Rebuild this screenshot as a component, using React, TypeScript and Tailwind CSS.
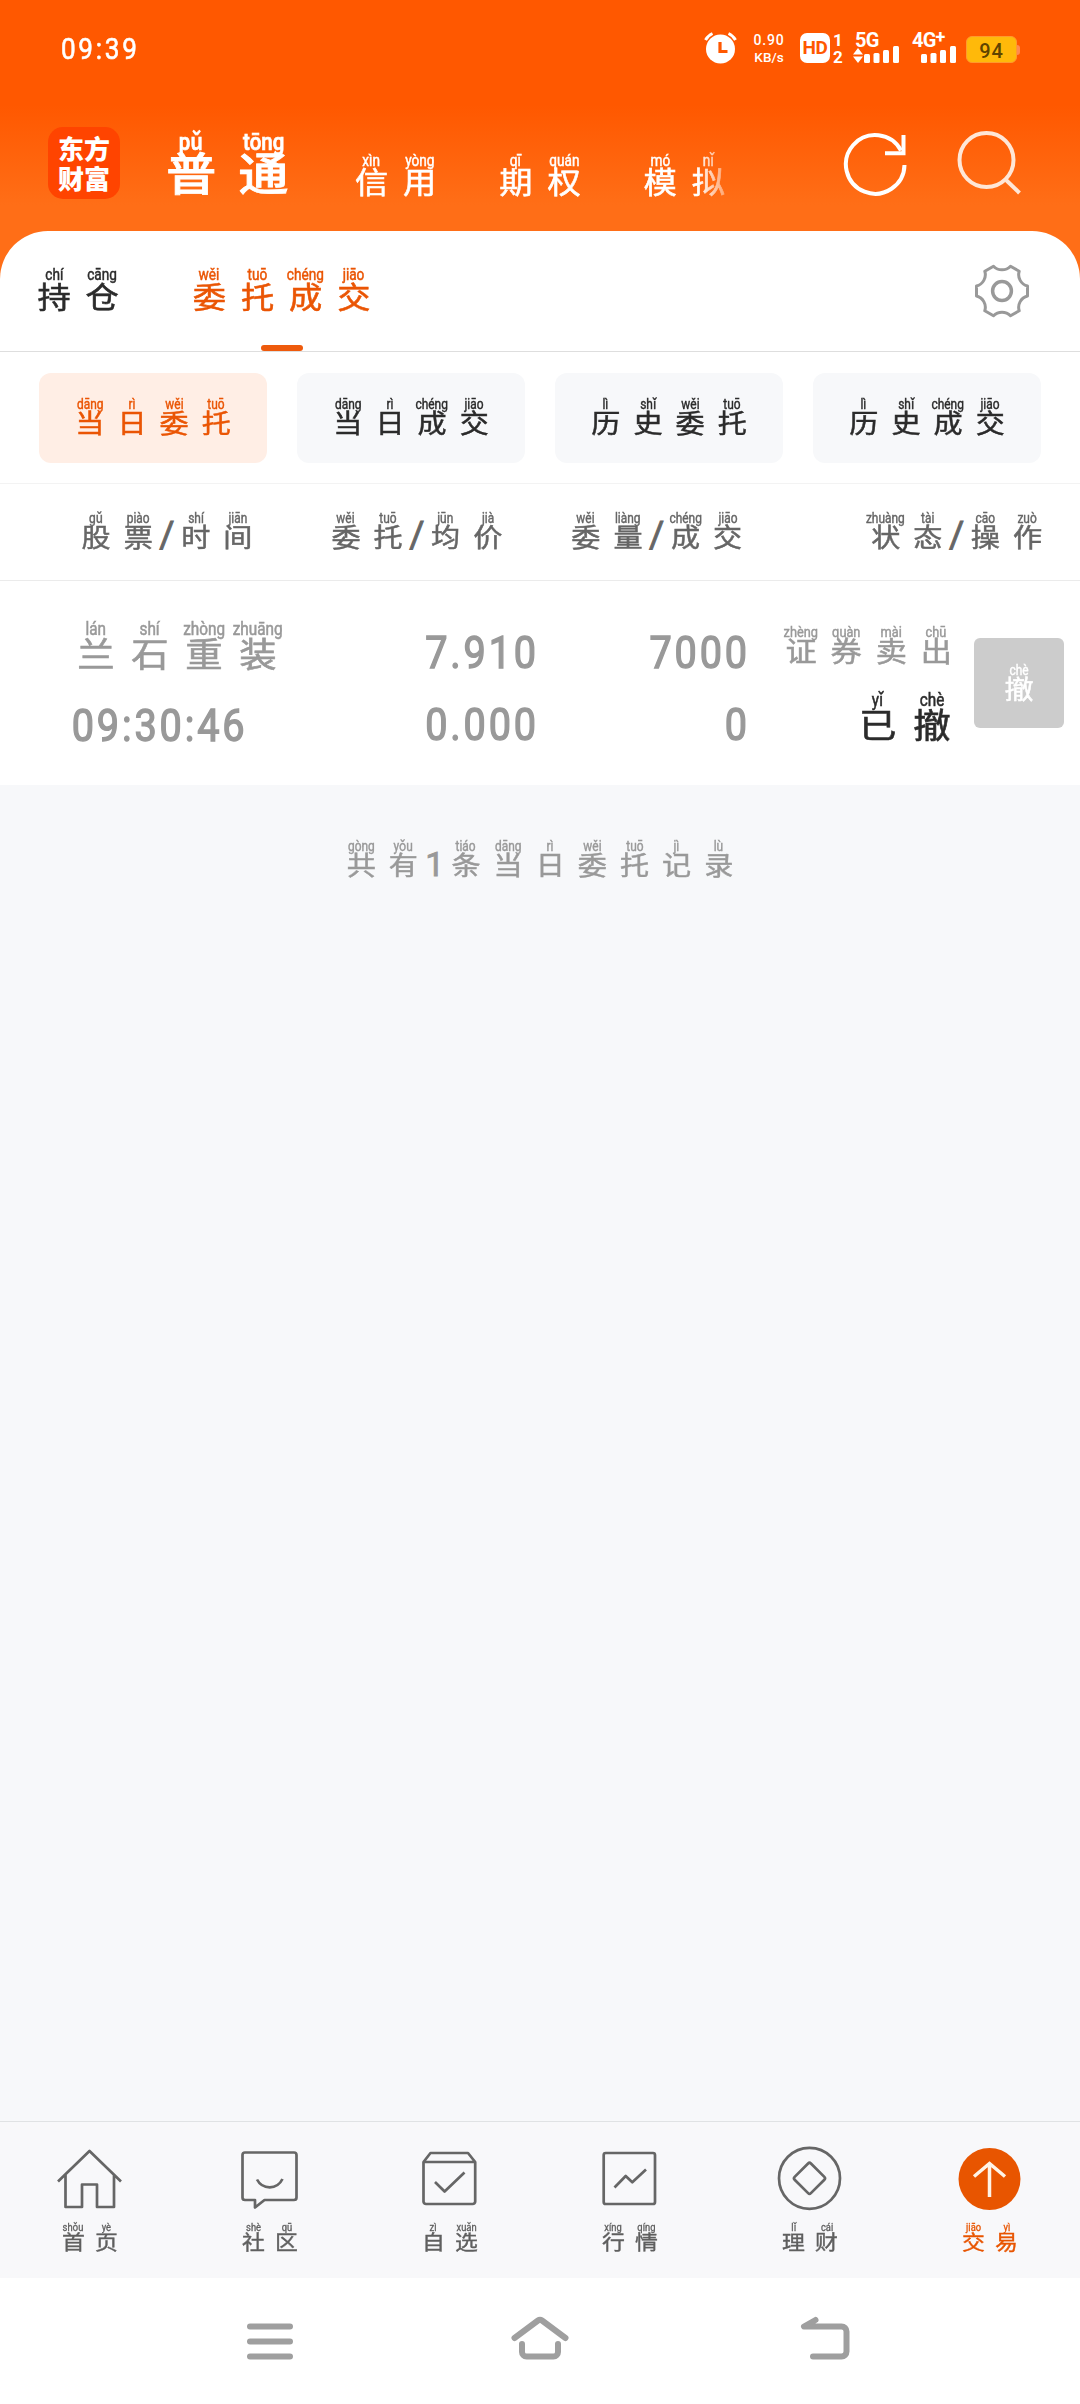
import React from "react";
import clsx from "clsx";

type Syllable = [string, string?];

// Each entry is [character, pinyin]; entries without pinyin are plain glyphs
const CHICANG: Syllable[] = [["持", "chí"], ["仓", "cāng"]];
const WEITUO: Syllable[] = [["委", "wěi"], ["托", "tuō"]];
const CHENGJIAO: Syllable[] = [["成", "chéng"], ["交", "jiāo"]];
const DANGRI: Syllable[] = [["当", "dāng"], ["日", "rì"]];
const LISHI: Syllable[] = [["历", "lì"], ["史", "shǐ"]];
const SLASH: Syllable[] = [["/"]];

interface PinyinProps {
  text: Syllable[];
  className?: string;
}

function Pinyin({ text, className }: PinyinProps) {
  return (
    <div className={clsx("flex shrink-0", className)}>
      {text.map(([char, pinyin], i) =>
        pinyin ? (
          <span key={i} className="flex w-[1.505em] flex-col items-center whitespace-nowrap pt-[.03em]">
            <span className="scale-x-[.87] text-[.49em] leading-none [-webkit-text-stroke:.03em]">{pinyin}</span>
            <span className="mt-[.06em] scale-y-[.9] text-[1.04em] leading-[.8em] [-webkit-text-stroke:.018em]">
              {char}
            </span>
          </span>
        ) : (
          <span
            key={i}
            className={clsx(
              "flex items-end justify-center [-webkit-text-stroke:.03em]",
              char === "/" ? "w-[.55em]" : "w-[.73em]"
            )}
          >
            <span className={clsx(char === "/" ? "text-[1.32em] leading-[.86em]" : "text-[1.21em] leading-[.8em]")}>
              {char}
            </span>
          </span>
        )
      )}
    </div>
  );
}

function SignalBars() {
  return (
    <svg width="36" height="17" viewBox="0 0 36 17" fill="#fff">
      <rect x="0" y="8" width="6" height="9" rx="1.5" />
      <rect x="9.5" y="7" width="6" height="10" rx="1.5" />
      <rect x="19" y="4" width="6" height="13" rx="1.5" />
      <rect x="29" y="0" width="6" height="17" rx="1.5" />
    </svg>
  );
}

function StatusBar() {
  return (
    <div className="flex h-[96px] items-center pl-[61px] pr-[60px] text-white">
      <span className="mt-[3px] origin-left scale-x-[.9] text-[29px] leading-none tracking-[3px] [-webkit-text-stroke:.6px]">
        09:39
      </span>
      <svg className="ml-auto" width="33" height="32" viewBox="0 0 33 32">
        <circle cx="16.5" cy="17" r="14.5" fill="#fff" />
        <path d="M1.5 8Q4 3.500 8.500 1.500M31.500 8Q29 3.500 24.500 1.500" stroke="#fff" strokeWidth="3" fill="none" />
        <path d="M16 10v9.500h7.500" stroke="#ff5800" strokeWidth="3.2" fill="none" />
      </svg>
      <div className="ml-4 flex w-[32px] flex-col gap-[3px] text-center text-[14px] font-medium leading-[14px]">
        <span className="tracking-[.8px]">0.90</span>
        <span className="text-[13.5px]">KB/s</span>
      </div>
      <div className="ml-[15px] flex h-[30px] w-[30px] items-center justify-center rounded-[7px] bg-white text-[19px] font-bold tracking-[-.5px] text-[#ff5800]">
        HD
      </div>
      <div className="ml-[2px] flex w-[12px] flex-col gap-[1px] text-center text-[17px] font-bold leading-[16px]">
        <span>1</span>
        <span>2</span>
      </div>
      <div className="ml-[9px] flex w-[47px] flex-col">
        <span className="h-[13px] pl-[2px] text-[20px] font-bold leading-[14px] tracking-[-.8px]">5G</span>
        <div className="flex items-end">
          <svg width="10" height="15" viewBox="0 0 10 15" fill="#fff" className="mr-[1px]">
            <path d="M5 0l5 6.500H0zM5 15l5-6.500H0z" />
          </svg>
          <SignalBars />
        </div>
      </div>
      <div className="ml-[12px] flex w-[45px] flex-col items-end">
        <div className="flex h-[13px] w-full text-[20px] font-bold leading-[14px] tracking-[-.8px]">
          <span>4G</span>
          <span className="text-[18px] leading-[8px]">+</span>
        </div>
        <SignalBars />
      </div>
      <div className="ml-[9px] mt-[3px] flex items-center">
        <div className="flex h-[27px] w-[51px] items-center justify-center rounded-[6px] border border-[#ff9a2c] bg-[#ffb90a] pt-[2px] text-[20px] font-medium tracking-[1px] text-[#5f4300]">
          94
        </div>
        <div className="h-[10px] w-[3px] rounded-r-sm bg-[#ff8a50]" />
      </div>
    </div>
  );
}

function Header() {
  return (
    <div className="flex h-[135px] items-end text-white">
      <div className="mb-8 ml-12 flex h-[72px] w-[72px] flex-col items-center justify-center rounded-[15px] bg-[#ff4400] font-[Noto_Sans_CJK_SC] text-[26px] font-black leading-[30px]">
        <span>东方</span>
        <span>财富</span>
      </div>
      <div className="ml-[35px] flex items-end gap-12 pb-[34px] text-[32px] [mask-image:linear-gradient(to_right,#000_94%,transparent_102%)]">
        <Pinyin className="text-[48px] font-medium" text={[["普", "pǔ"], ["通", "tōng"]]} />
        <Pinyin text={[["信", "xìn"], ["用", "yòng"]]} />
        <Pinyin text={[["期", "qī"], ["权", "quán"]]} />
        <Pinyin text={[["模", "mó"], ["拟", "nǐ"]]} />
      </div>
      <svg className="mb-[31px] ml-auto" width="72" height="72" viewBox="0 0 72 72" fill="none" stroke="#fff" strokeWidth="4">
        <path d="M62.500 37A29.300 29.300 0 1 1 59 22.500" />
        <path d="M43 25.300H61.500V7" />
      </svg>
      <svg
        className="mb-[31px] ml-10 mr-[54px]"
        width="72"
        height="72"
        viewBox="0 0 72 72"
        fill="none"
        stroke="#ffe6d6"
        strokeWidth="4"
      >
        <circle cx="32.5" cy="32" r="27" />
        <path d="M51.500 51.500L65.500 65" />
      </svg>
    </div>
  );
}

function SectionTabs() {
  return (
    <div className="flex h-[121px] items-start border-b border-[#dedede] pl-[30px] text-[32px]">
      <Pinyin className="mt-[35px] text-[#2b2b2b]" text={CHICANG} />
      <div className="ml-[59px] flex flex-col items-center pt-[35px] text-[#ea5504]">
        <Pinyin text={[...WEITUO, ...CHENGJIAO]} />
        <span className="mt-[34px] h-[6px] w-[42px] rounded-full bg-[#ee5a0c]" />
      </div>
      <svg
        className="ml-auto mr-[48px] mt-[30px]"
        width="60"
        height="60"
        viewBox="-30 -30 60 60"
        fill="none"
        stroke="#999"
        strokeWidth="3"
        strokeLinejoin="round"
      >
        <path d="M25.500-5V5A11.700 11.700 0 0 0 17.200 19.800L8.500 24.800A11.700 11.700 0 0 0-8.500 24.800L-17.200 19.800A11.700 11.700 0 0 0-25.500 5V-5A11.700 11.700 0 0 0-17.200-19.800L-8.500-24.800A11.700 11.700 0 0 0 8.500-24.800L17.200-19.800A11.700 11.700 0 0 0 25.500-5Z" />
        <circle r="9.400" strokeWidth="3.500" />
      </svg>
    </div>
  );
}

const filters: { text: Syllable[]; active?: boolean }[] = [
  { text: [...DANGRI, ...WEITUO], active: true },
  { text: [...DANGRI, ...CHENGJIAO] },
  { text: [...LISHI, ...WEITUO] },
  { text: [...LISHI, ...CHENGJIAO] },
];

function Filters() {
  return (
    <div className="flex h-[132px] gap-[30px] border-b border-[#f3f3f3] px-[39px] pt-[21px]">
      {filters.map((filter, i) => (
        <button
          key={i}
          className={clsx(
            "flex h-[90px] flex-1 items-start justify-center rounded-xl pt-[24px] text-[28px]",
            filter.active ? "bg-[#ffeee5] text-[#ea5504]" : "bg-[#f7f8fa] text-[#2b2b2b]"
          )}
        >
          <Pinyin text={filter.text} />
        </button>
      ))}
    </div>
  );
}

function TableHead() {
  return (
    <div className="flex h-[97px] items-start border-b border-[#ebebeb] pl-[75px] pt-[27px] text-[28px] text-[#666]">
      <Pinyin text={[["股", "gǔ"], ["票", "piào"], ...SLASH, ["时", "shí"], ["间", "jiān"]]} />
      <Pinyin className="ml-[66px]" text={[...WEITUO, ...SLASH, ["均", "jūn"], ["价", "jià"]]} />
      <Pinyin className="ml-[56px]" text={[["委", "wěi"], ["量", "liàng"], ...SLASH, ...CHENGJIAO]} />
      <Pinyin
        className="ml-[116px]"
        text={[["状", "zhuàng"], ["态", "tài"], ...SLASH, ["操", "cāo"], ["作", "zuò"]]}
      />
    </div>
  );
}

function OrderRow() {
  return (
    <div className="flex h-[204px] bg-white pl-[69px] text-[#999]">
      <div className="w-[216px] pt-[39px]">
        <Pinyin className="text-[36px]" text={[["兰", "lán"], ["石", "shí"], ["重", "zhòng"], ["装", "zhuāng"]]} />
        <div className="mt-[33px] w-fit origin-left scale-x-[.9] pl-[3px] text-[44px] leading-[44px] tracking-[3.2px] [-webkit-text-stroke:1.4px]">
          09:30:46
        </div>
      </div>
      <div className="flex w-[254px] origin-right scale-x-[.9] flex-col items-end gap-7 pt-[50px] text-[44px] leading-[44px] tracking-[3.2px] [-webkit-text-stroke:1.4px]">
        <span>7.910</span>
        <span>0.000</span>
      </div>
      <div className="flex w-[211px] origin-right scale-x-[.9] flex-col items-end gap-7 pt-[50px] text-[44px] leading-[44px] tracking-[3.2px] [-webkit-text-stroke:1.4px]">
        <span>7000</span>
        <span>0</span>
      </div>
      <div className="flex w-[209px] flex-col items-end pt-[43px]">
        <Pinyin className="text-[30px]" text={[["证", "zhèng"], ["券", "quàn"], ["卖", "mài"], ["出", "chū"]]} />
        <Pinyin className="mt-[25px] text-[36px] text-[#2b2b2b]" text={[["已", "yǐ"], ["撤", "chè"]]} />
      </div>
      <button className="ml-[15px] mt-[57px] flex h-[90px] w-[90px] items-start justify-center rounded-md bg-[#ccc] pt-[25px] text-[28px] text-white">
        <Pinyin text={[["撤", "chè"]]} />
      </button>
    </div>
  );
}

const navItems: { text: Syllable[]; icon: React.ReactNode; active?: boolean }[] = [
  {
    text: [["首", "shǒu"], ["页", "yè"]],
    icon: <path d="M4 39.500L35.500 9L67 39.500M11.500 33V65H28V42.500H43V65H60V33" />,
  },
  {
    text: [["社", "shè"], ["区", "qū"]],
    icon: (
      <>
        <path d="M11 10.500H60a2.500 2.500 0 0 1 2.500 2.500V55.500a2.500 2.500 0 0 1-2.500 2.500H30.500L21 65.500V58H11a2.500 2.500 0 0 1-2.500-2.500V13a2.500 2.500 0 0 1 2.500-2.500Z" />
        <path d="M23 37.500Q27 45.300 35.700 45.300T48.500 37" />
      </>
    ),
  },
  {
    text: [["自", "zì"], ["选", "xuǎn"]],
    icon: (
      <>
        <path d="M9.500 20L16.500 11H54L61.200 20V59.500a2.500 2.500 0 0 1-2.500 2.500H12a2.500 2.500 0 0 1-2.500-2.500ZH61" />
        <path d="M21 40L30.600 49.500L50.500 30.500" />
      </>
    ),
  },
  {
    text: [["行", "xíng"], ["情", "qíng"]],
    icon: (
      <>
        <rect x="9.700" y="11" width="51.300" height="51" rx="2" />
        <path d="M20.500 45.500L31.700 34L38.300 40.300L52 27.500" />
      </>
    ),
  },
  {
    text: [["理", "lǐ"], ["财", "cái"]],
    icon: (
      <>
        <circle cx="35.500" cy="36.300" r="30.500" />
        <rect x="24" y="24.800" width="23" height="23" rx="2" transform="rotate(45 35.500 36.300)" />
      </>
    ),
  },
  {
    text: [["交", "jiāo"], ["易", "yì"]],
    active: true,
    icon: (
      <>
        <circle cx="35.500" cy="37" r="31" fill="#e85500" stroke="none" />
        <path d="M20 34.500L35.500 21.500L51 34.500M35.500 21.500V55" stroke="#fff3e6" strokeWidth="3.500" strokeLinejoin="miter" />
      </>
    ),
  },
];

function BottomNav() {
  return (
    <nav className="grid h-[157px] grid-cols-6 border-t border-[#e0e2e4] bg-[#f8f8fa] text-[22px]">
      {navItems.map((item, i) => (
        <div key={i} className={clsx("flex flex-col items-center pt-5", item.active ? "text-[#e85500]" : "text-[#5f5f5f]")}>
          <svg
            width="72"
            height="72"
            viewBox="0 0 72 72"
            fill="none"
            stroke="#666"
            strokeWidth="2.700"
            strokeLinejoin="round"
          >
            {item.icon}
          </svg>
          <Pinyin className="mt-[8px]" text={item.text} />
        </div>
      ))}
    </nav>
  );
}

function SystemNav() {
  return (
    <div className="flex h-[126px] items-start justify-between bg-white px-[230px] pt-[33px]">
      {[
        "M10 15.500H50M10 30.500H50M10 45.500H50",
        "M4.500 27L28 9.500Q30 8 32 9.500L55.500 27M12 33V41a4.500 4.500 0 0 0 4.500 4.500H43.500a4.500 4.500 0 0 0 4.500-4.500V33",
        "M35.500 9L24 15.500H61.500a5 5 0 0 1 5 5V40.500a5 5 0 0 1-5 5H33",
      ].map((d) => (
        <svg
          key={d}
          width="80"
          height="60"
          viewBox="-10 0 80 60"
          fill="none"
          stroke="#9f9f9f"
          strokeWidth="6"
          strokeLinecap="round"
          strokeLinejoin="round"
        >
          <path d={d} />
        </svg>
      ))}
    </div>
  );
}

export default function App() {
  return (
    <div className="flex h-[2404px] w-[1080px] flex-col overflow-hidden bg-[#f7f8fa] font-[Roboto,'Noto_Sans_CJK_SC',sans-serif]">
      <div className="bg-[linear-gradient(to_bottom,#ff5800_105px,#ff6e17_205px)]">
        <StatusBar />
        <Header />
        <div className="rounded-t-[48px] bg-white">
          <SectionTabs />
          <Filters />
          <TableHead />
        </div>
      </div>
      <OrderRow />
      <div className="flex flex-1 items-start justify-center pt-[54px] text-[28px] text-[#999]">
        <Pinyin
          text={[
            ["共", "gòng"],
            ["有", "yǒu"],
            ["1"],
            ["条", "tiáo"],
            ...DANGRI,
            ...WEITUO,
            ["记", "jì"],
            ["录", "lù"],
          ]}
        />
      </div>
      <BottomNav />
      <SystemNav />
    </div>
  );
}
